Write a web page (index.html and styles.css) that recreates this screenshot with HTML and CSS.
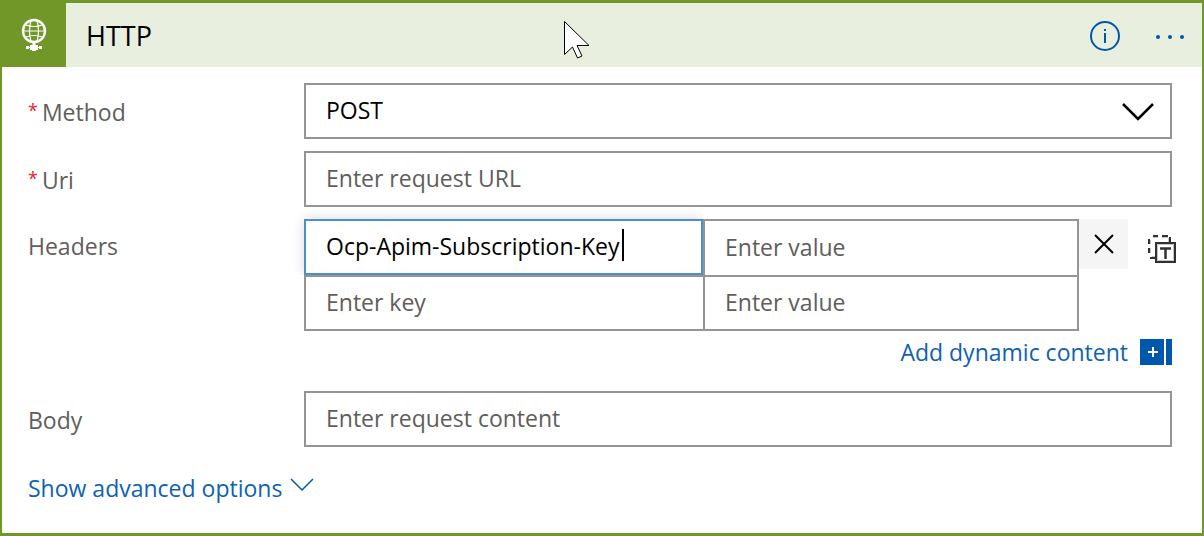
FILE: index.html
```
<!DOCTYPE html>
<html lang="en">
<head>
<meta charset="utf-8">
<title>HTTP</title>
<link rel="stylesheet" href="styles.css">
</head>
<body>
<main class="card">
  <header class="card-header">
    <span class="brand">
      <svg width="26" height="34" viewBox="0 0 26 34" fill="none" stroke="#fff">
        <circle cx="13" cy="13" r="11" stroke-width="2.400"/>
        <path d="M10 2.500Q7 13 10 23.500M16 2.500q3 10.500 0 21M2 13h22M5 7q8 3 16 0M5 19q8-3 16 0" stroke-width="1.200"/>
        <path d="M13 24v4" stroke-width="3"/>
        <path d="M9 27h8v5H9zM5 28h3v3H5zM18 28h3v3h-3zM11 32h4v1h-4z" fill="#fff" stroke="none"/>
        <path d="M7 29.500h12" stroke-width="1"/>
      </svg>
    </span>
    <h1 class="title">HTTP</h1>
    <button class="icon-button" type="button" aria-label="Information">
      <svg width="32" height="32" viewBox="0 0 32 32" fill="none" stroke="#0058ad" stroke-width="2">
        <circle cx="16" cy="16" r="14"/>
        <path d="M16 13v10M16 9v2"/>
      </svg>
    </button>
    <button class="icon-button more" type="button" aria-label="More commands">
      <svg width="32" height="32" viewBox="0 0 32 32" fill="#0058ad">
        <circle cx="4" cy="17" r="2"/><circle cx="16" cy="17" r="2"/><circle cx="28" cy="17" r="2"/>
      </svg>
    </button>
    <svg class="pointer" width="28" height="40" viewBox="0 0 28 40" fill="#fff" stroke="#000" stroke-width="1">
      <path d="M1.500 1.500v33l8-7.500 5 11 4.500-2-5-10.500h12z"/>
    </svg>
  </header>

  <form class="form">
    <div class="row">
      <label class="label" for="method"><span class="required">*</span>Method</label>
      <div class="select-box">
        <select class="field" id="method"><option>POST</option><option>GET</option></select>
        <svg class="chevron" width="32" height="18" viewBox="0 0 32 18" fill="none" stroke="#000" stroke-width="2.500"><path d="M1 1l15 15L31 1"/></svg>
      </div>
    </div>
    <div class="row">
      <label class="label" for="uri"><span class="required">*</span>Uri</label>
      <input class="field" id="uri" type="text" placeholder="Enter request URL">
    </div>
    <div class="row headers-row">
      <span class="label" id="headers-label">Headers</span>
      <div class="pairs" role="group" aria-labelledby="headers-label">
        <div class="active-cell">
          <input class="cell" type="text" aria-label="Header key 1" value="Ocp-Apim-Subscription-Key">
          <span class="caret"></span>
        </div>
        <input class="cell" type="text" aria-label="Header value 1" placeholder="Enter value">
        <input class="cell" type="text" aria-label="Header key 2" placeholder="Enter key">
        <input class="cell" type="text" aria-label="Header value 2" placeholder="Enter value">
      </div>
      <button class="remove" type="button" aria-label="Remove header">
        <svg width="20" height="20" viewBox="0 0 20 20" fill="none" stroke="#000" stroke-width="2"><path d="M1 1l18 18M19 1L1 19"/></svg>
      </button>
      <button class="switch" type="button" aria-label="Switch to text mode">
        <svg width="28" height="28" viewBox="0 0 28 28" fill="none" stroke="#323130">
          <path d="M5 2.500h5M14 2.500h6M2.500 5v4M2.500 13v5M4 21.500h3M20.500 3v4" stroke="#c4c4c4" stroke-width="1"/>
          <path d="M5 1h5M14 1h6M22 2v5M1 4v5M1 13v5M2 23h5" stroke-width="2"/>
          <path d="M9.500 9.500h16v16h-16z" stroke="#c4c4c4" stroke-width="1"/>
          <path d="M8 8h19v19H8z" stroke-width="2"/>
          <path d="M12 13.500h11M17.500 13v11" stroke-width="2.500"/>
        </svg>
      </button>
    </div>
    <div class="dynamic">
      <a class="link" href="#">Add dynamic content
        <svg width="32" height="26" viewBox="0 0 32 26"><path d="M0 0h24v26H0zM26 0h6v26h-6z" fill="#0058ad"/><path d="M8 13h10M13 8v10" stroke="#fff" stroke-width="2"/></svg>
      </a>
    </div>
    <div class="row">
      <label class="label body-label" for="body">Body</label>
      <input class="field" id="body" type="text" placeholder="Enter request content">
    </div>
    <a class="link advanced" href="#">Show advanced options
      <svg width="24" height="14" viewBox="0 0 24 14" fill="none" stroke="#0058ad" stroke-width="1.500"><path d="M1 1l11 11L23 1"/></svg>
    </a>
  </form>
</main>
</body>
</html>
```
FILE: styles.css
```
* { box-sizing: border-box; }

body {
  margin: 0;
  font: 23px/32px "Open Sans", "Noto Sans", sans-serif;
  color: #000;
  background: #fff;
}

.card {
  min-height: 100vh;
  border: solid #709727;
  border-width: 3px 2px;
}

.card-header {
  position: relative;
  display: flex;
  align-items: center;
  height: 64px;
  padding: 2px 16px 0 0;
  background: #e8efdf;
}

.brand {
  display: flex;
  align-items: center;
  justify-content: center;
  width: 64px;
  height: 64px;
  margin-top: -2px;
  background: #709727;
}

.title {
  flex: 1;
  margin: 0;
  padding-left: 20px;
  font-size: 27px;
  font-weight: 400;
}

button {
  display: flex;
  align-items: center;
  justify-content: center;
  padding: 0;
  border: 0;
  background: none;
}

.more { margin-left: 33px; }

.pointer {
  position: absolute;
  left: 561px;
  top: 17px;
}

.form { padding: 16px 30px 0 26px; }

.row {
  display: flex;
  align-items: flex-start;
  margin-bottom: 12px;
}

.label {
  flex: none;
  width: 276px;
  padding-top: 13px;
  color: #605e5c;
}

.required {
  margin-right: 4px;
  font-size: 18px;
  line-height: 20px;
  vertical-align: 4px;
  color: #e3242f;
}

.field,
.cell {
  flex: 1;
  width: 100%;
  min-width: 0;
  height: 56px;
  margin: 0;
  padding: 0 20px 2px;
  border: 2px solid #979593;
  border-radius: 0;
  outline: 0;
  font: inherit;
  color: #000;
  background: #fff;
  appearance: none;
}

::placeholder {
  color: #605e5c;
  opacity: 1;
}

.select-box {
  position: relative;
  flex: 1;
}

.select-box .field { display: block; }

.chevron {
  position: absolute;
  right: 18px;
  top: 20px;
}

.headers-row {
  margin-right: -4px;
  margin-bottom: 8px;
}

.headers-row .label { padding-top: 11px; }

.pairs {
  flex: 1;
  display: grid;
  grid-template-columns: 397fr 372fr;
  grid-template-rows: 54px 52px;
  gap: 2px;
  padding: 2px;
  background: #979593;
}

.cell {
  height: 100%;
  border: 0;
}

.active-cell {
  position: relative;
  margin: -2px 0 0 -2px;
  box-shadow: 0 0 12px rgba(0, 0, 0, 0.15);
  clip-path: inset(-12px 0 0 -12px);
}

.active-cell .cell {
  display: block;
  border: 2px solid #4a90cf;
}

.caret {
  position: absolute;
  left: 318px;
  top: 10px;
  width: 2px;
  height: 32px;
  background: #000;
}

.remove {
  width: 49px;
  height: 50px;
  background: #f5f5f5;
}

.switch { margin: 16px 0 0 20px; }

.link {
  display: inline-flex;
  align-items: center;
  gap: 12px;
  color: #0f62b0;
  text-decoration: none;
}

.dynamic {
  display: flex;
  justify-content: flex-end;
  height: 52px;
  line-height: 26px;
}

.dynamic .link { height: 26px; }

.advanced {
  gap: 8px;
  margin-top: 13px;
}

.advanced svg { margin-bottom: 6px; }
```
